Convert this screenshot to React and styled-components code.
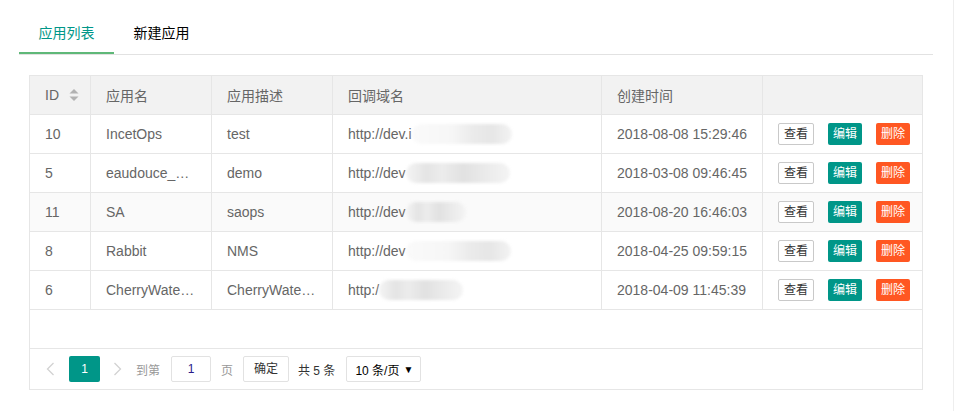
import React from 'react';
import styled, { createGlobalStyle } from 'styled-components';

const GlobalStyle = createGlobalStyle`
  html, body {
    margin: 0;
    padding: 0;
    background: #fff;
    font-family: "Liberation Sans", "Noto Sans CJK SC", sans-serif;
    font-size: 14px;
    color: #666;
  }
`;

const Page = styled.div`
  box-sizing: border-box;
  width: 954px;
  height: 411px;
  padding: 14px 20px 0 19px;
  border-right: 1px solid #eee;
`;

const TabBar = styled.ul`
  display: flex;
  margin: 0;
  padding: 0;
  height: 40px;
  list-style: none;
  border-bottom: 1px solid #e2e2e2;
`;

const Tab = styled.li`
  width: 95px;
  text-align: center;
  line-height: 39px;
  font-size: 14px;
  cursor: pointer;
  color: ${p => (p.active ? '#009688' : '#000')};
  box-shadow: ${p => (p.active ? 'inset 0 -2px 0 #5FB878' : 'none')};
`;

const TableBox = styled.div`
  margin: 20px 10px 0;
  border: 1px solid #e6e6e6;
`;

const Row = styled.div`
  display: grid;
  grid-template-columns: 60px 121px 121px 269px 161px 160px;
  height: 39px;
  box-sizing: border-box;
  border-bottom: 1px solid #e6e6e6;
  background: ${p => (p.head ? '#f2f2f2' : p.hover ? '#fafafa' : '#fff')};
`;

const Cell = styled.div`
  box-sizing: border-box;
  display: flex;
  align-items: center;
  padding: 0 15px;
  min-width: 0;
  border-left: ${p => (p.first ? 'none' : '1px solid #e6e6e6')};
  color: #666;
  font-size: 14px;
  white-space: nowrap;
`;

const SortIcon = styled.svg`
  margin-left: 10px;
  flex: none;
`;

const Mask = styled.span`
  display: inline-block;
  height: 20px;
  width: ${p => p.w}px;
  border-radius: 10px;
  background: ${p => p.light
    ? 'linear-gradient(90deg, #fafafa 0%, #f6f6f6 40%, #ebebeb 60%, #e6e6e6 80%, #f3f3f3 100%)'
    : 'linear-gradient(90deg, #f4f4f4 0%, #e4e4e4 20%, #ececec 35%, #e1e1e1 55%, #eaeaea 75%, #f4f4f4 100%)'};
  filter: blur(1.5px);
`;

const Actions = styled.div`
  display: flex;
  align-items: center;
  gap: 14px;
`;

const Btn = styled.button`
  height: 22px;
  line-height: 20px;
  padding: 0 5px;
  font-size: 12px;
  font-family: inherit;
  border-radius: 2px;
  cursor: pointer;
  box-sizing: border-box;
  border: ${p => (p.kind === 'primary' ? '1px solid #c9c9c9' : 'none')};
  background: ${p => (p.kind === 'edit' ? '#009688' : p.kind === 'del' ? '#FF5722' : '#fff')};
  color: ${p => (p.kind === 'primary' ? '#333' : '#fff')};
`;

const Empty = styled.div`
  height: 38px;
  border-bottom: 1px solid #e6e6e6;
`;

const Pager = styled.div`
  display: flex;
  align-items: center;
  height: 40px;
  padding-left: 16px;
  font-size: 12px;
  color: #333;
`;

const Arrow = styled.svg`
  margin-right: ${p => p.mr}px;
  flex: none;
`;

const Current = styled.span`
  width: 31px;
  height: 26px;
  line-height: 26px;
  text-align: center;
  background: #009688;
  color: #fff;
  border-radius: 2px;
  margin-right: 13px;
`;

const Hint = styled.span`
  color: ${p => (p.dark ? '#333' : '#999')};
  margin-right: ${p => p.mr}px;
`;

const PageInput = styled.span`
  box-sizing: border-box;
  width: 40px;
  height: 26px;
  line-height: 24px;
  text-align: center;
  border: 1px solid #e2e2e2;
  border-radius: 2px;
  color: #2a1a8a;
  margin-right: 10px;
`;

const GoBtn = styled.span`
  box-sizing: border-box;
  width: 46px;
  height: 26px;
  line-height: 24px;
  text-align: center;
  border: 1px solid #e2e2e2;
  border-radius: 2px;
  color: #333;
  margin-right: 9px;
`;

const Select = styled.span`
  box-sizing: border-box;
  display: flex;
  align-items: center;
  justify-content: space-between;
  width: 75px;
  height: 26px;
  padding: 0 7px 0 8px;
  border: 1px solid #e2e2e2;
  border-radius: 2px;
  color: #000;
`;

const Caret = styled.span`
  font-size: 10px;
`;

const rows = [
  { id: '10', name: 'IncetOps', desc: 'test', url: 'http://dev.i', mask: 100, light: true, time: '2018-08-08 15:29:46' },
  { id: '5', name: 'eaudouce_…', desc: 'demo', url: 'http://dev', mask: 104, time: '2018-03-08 09:46:45' },
  { id: '11', name: 'SA', desc: 'saops', url: 'http://dev', mask: 60, time: '2018-08-20 16:46:03', hover: true },
  { id: '8', name: 'Rabbit', desc: 'NMS', url: 'http://dev', mask: 105, light: true, time: '2018-04-25 09:59:15' },
  { id: '6', name: 'CherryWate…', desc: 'CherryWate…', url: 'http:/', mask: 84, time: '2018-04-09 11:45:39' },
];

const App = () => {
  return (
    <Page>
      <GlobalStyle />
      <TabBar>
        <Tab active>应用列表</Tab>
        <Tab>新建应用</Tab>
      </TabBar>
      <TableBox>
        <Row head>
          <Cell first>
            ID
            <SortIcon width="10" height="14" viewBox="0 0 10 14">
              <path d="M5 1 L9.5 5.5 H0.5 Z" fill="#b2b2b2" />
              <path d="M5 13 L9.5 8.5 H0.5 Z" fill="#b2b2b2" />
            </SortIcon>
          </Cell>
          <Cell>应用名</Cell>
          <Cell>应用描述</Cell>
          <Cell>回调域名</Cell>
          <Cell>创建时间</Cell>
          <Cell></Cell>
        </Row>
        {rows.map(r => (
          <Row key={r.id} hover={r.hover}>
            <Cell first>{r.id}</Cell>
            <Cell>{r.name}</Cell>
            <Cell>{r.desc}</Cell>
            <Cell>
              {r.url}
              <Mask w={r.mask} light={r.light} />
            </Cell>
            <Cell>{r.time}</Cell>
            <Cell>
              <Actions>
                <Btn kind="primary">查看</Btn>
                <Btn kind="edit">编辑</Btn>
                <Btn kind="del">删除</Btn>
              </Actions>
            </Cell>
          </Row>
        ))}
        <Empty />
        <Pager>
          <Arrow mr={14} width="9" height="14" viewBox="0 0 9 14">
            <path d="M7.5 1 L1.5 7 L7.5 13" fill="none" stroke="#d2d2d2" strokeWidth="1.3" />
          </Arrow>
          <Current>1</Current>
          <Arrow mr={14} width="9" height="14" viewBox="0 0 9 14">
            <path d="M1.5 1 L7.5 7 L1.5 13" fill="none" stroke="#d2d2d2" strokeWidth="1.3" />
          </Arrow>
          <Hint mr={11}>到第</Hint>
          <PageInput>1</PageInput>
          <Hint mr={10}>页</Hint>
          <GoBtn>确定</GoBtn>
          <Hint dark mr={11}>共 5 条</Hint>
          <Select>
            10 条/页
            <Caret>▼</Caret>
          </Select>
        </Pager>
      </TableBox>
    </Page>
  );
};

export default App;
